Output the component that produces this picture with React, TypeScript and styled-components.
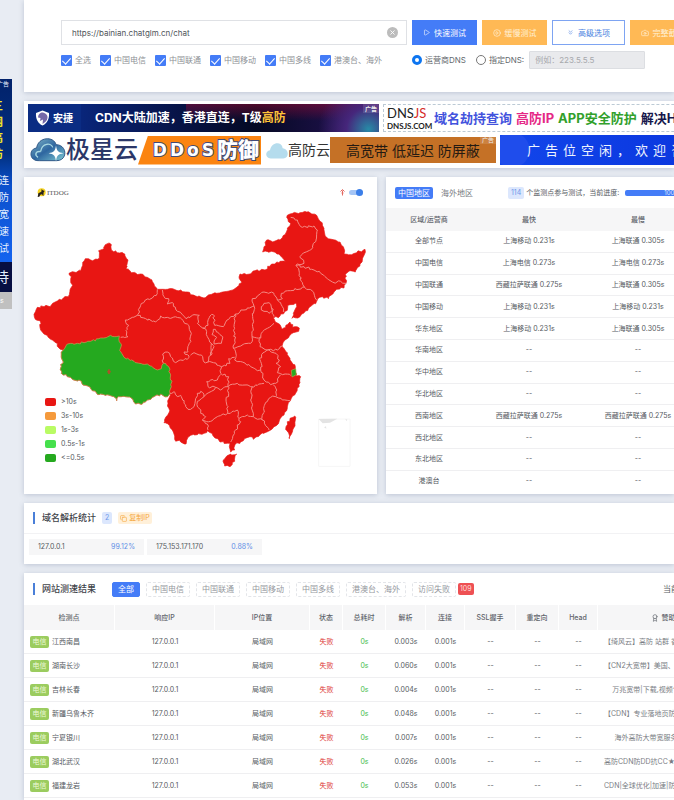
import { FC, useState } from "react";
import styled, { createGlobalStyle, css } from "styled-components";
import { Play, CirclePlay, ChevronsDown, Camera, X, Copy, Award } from "lucide-react";

type Point = [number, number];

const carriers = ["全选", "中国电信", "中国联通", "中国移动", "中国多线", "港澳台、海外"];

const legends = [
    { color: "#e81613", text: ">10s" },
    { color: "#f59a3c", text: "3s-10s" },
    { color: "#b9fb64", text: "1s-3s" },
    { color: "#45e04c", text: "0.5s-1s" },
    { color: "#25a91f", text: "<=0.5s" },
];

const regions = [
    ["全部节点", "上海移动 0.231s", "上海联通 0.305s"],
    ["中国电信", "上海电信 0.273s", "上海电信 0.273s"],
    ["中国联通", "西藏拉萨联通 0.275s", "上海联通 0.305s"],
    ["中国移动", "上海移动 0.231s", "上海移动 0.231s"],
    ["华东地区", "上海移动 0.231s", "上海联通 0.305s"],
    ["华南地区", "--", "--"],
    ["华中地区", "--", "--"],
    ["华北地区", "--", "--"],
    ["西南地区", "西藏拉萨联通 0.275s", "西藏拉萨联通 0.275s"],
    ["西北地区", "--", "--"],
    ["东北地区", "--", "--"],
    ["港澳台", "--", "--"],
];

const filters = ["全部", "中国电信", "中国联通", "中国移动", "中国多线", "港澳台、海外"];

const results = [
    { name: "江西南昌", parse: "0.003s", sponsor: "【绮风云】高防 站群 香港 美国服务器租用" },
    { name: "湖南长沙", parse: "0.060s", sponsor: "【CN2大宽带】美国、香港高防服务器租用" },
    { name: "吉林长春", parse: "0.004s", sponsor: "万兆宽带|下载,视频专用服务器租用" },
    { name: "新疆乌鲁木齐", parse: "0.048s", sponsor: "【CDN】专业落地页防红防封海外加速节点" },
    { name: "宁夏银川", parse: "0.007s", sponsor: "海外高防大带宽服务器租用托管网" },
    { name: "湖北武汉", parse: "0.026s", sponsor: "高防CDN防DD抗CC★免备案加速无视攻击" },
    { name: "福建龙岩", parse: "0.053s", sponsor: "CDN|全球优化|加速|防御|免备案海外节点" },
];

// 地图轮廓
const tibetSouth = "438,580 430,590 410,582 385,592 370,600 355,612 335,612 325,596 305,590 282,590 278,602 270,590 245,586 225,584 205,572 185,556 165,540 150,540 130,530 112,520 110,494 118,486 112,466 118,450";

const mainland = "30,343 36,330 40,322 60,320 66,316 78,320 86,310 100,303 118,294 136,284 138,270 146,256 140,242 142,230 135,220 150,216 170,212 176,196 184,176 200,180 220,178 226,166 224,152 240,146 244,134 258,130 262,150 280,158 298,160 308,176 310,188 306,206 322,218 350,222 370,232 384,240 390,252 400,268 430,268 470,270 490,276 500,284 525,288 540,294 556,284 578,280 618,272 638,262 653,248 646,236 648,222 678,222 693,212 723,210 743,192 768,184 784,184 776,174 764,162 743,154 716,156 720,140 728,120 743,124 768,120 783,104 790,84 800,70 788,52 798,42 828,38 848,36 878,46 888,64 900,85 908,112 923,118 948,126 958,140 960,162 983,164 998,158 1023,148 1018,170 1008,192 994,216 978,212 964,224 966,250 960,264 938,268 928,280 913,296 896,290 878,304 853,326 833,342 828,350 804,355 808,340 818,320 814,310 798,314 783,334 768,348 748,354 754,366 768,374 774,388 784,384 798,366 806,382 826,384 824,394 808,398 796,408 780,424 774,438 790,458 798,480 814,500 816,528 830,530 828,548 820,565 812,585 798,604 790,625 780,645 766,662 750,680 733,694 708,704 688,718 678,710 658,722 633,734 632,750 620,756 616,740 618,730 588,726 573,714 564,700 550,692 540,700 520,704 500,706 492,712 486,732 470,726 452,718 448,696 436,676 420,668 426,650 436,636 432,610 " + tibetSouth + " 105,444 100,430 80,418 60,402 50,390 48,362 34,358 30,343";

const tibet = "118,450 130,432 160,430 200,424 230,414 260,406 286,408 290,430 290,455 300,472 330,484 370,492 395,508 412,506 418,490 434,500 440,525 442,560 " + tibetSouth;

const islands = [
    "598,780 612,766 638,762 632,784 618,800 602,798 598,780",
    "786,680 798,655 812,648 814,660 806,690 796,716 786,680",
];

const borders = [
    "400,268 400,280 385,294 364,300 350,316 340,346 325,352 304,360 314,376 306,392 312,410 290,412",
    "340,346 365,356 395,366 410,348 430,352 470,354 490,372 502,400 496,430 492,455 480,456 495,468 490,478 470,480 455,488 430,456 416,462 418,490",
    "415,270 420,290 434,296 430,312 448,310 456,330 475,344 486,356 510,344 526,346 520,370 536,384 552,376 558,348 568,344 572,376 598,380 620,350 634,342",
    "574,388 588,404 596,410 592,430 570,432 578,412 564,404 568,388 574,388",
    "536,384 548,395 550,410 562,430 560,466 552,486 540,486 536,470 510,458 500,466",
    "562,430 570,440 560,466",
    "634,342 660,330 690,318 685,296 700,288 720,276 750,280 760,300 775,296 772,280 800,272 842,262 832,244 826,220 816,196",
    "816,196 840,200 870,210 890,220 910,236 930,248 950,244 966,250",
    "816,196 840,190 828,170 860,150 876,120 880,90 870,78 835,82 820,60 800,52",
    "842,262 864,272 880,302",
    "634,342 630,380 632,420 628,444 650,438 680,430 684,410",
    "690,318 686,350 686,380 684,410 710,412 712,400 730,385 750,370",
    "712,320 720,310 735,308 742,322 748,330 735,340 720,334 712,330 712,320",
    "742,322 744,340 750,350",
    "760,300 775,320 778,336",
    "712,412 705,424 708,440 730,450 760,450 774,438",
    "628,444 636,470 632,480 655,486 680,500 700,512 710,510 712,490 706,475 722,456 730,450",
    "730,450 756,460 766,480 756,490 770,500 760,518 775,524 800,526",
    "710,510 720,540 740,554 755,550 770,524",
    "552,486 568,488 593,500 618,490 614,476 632,472",
    "593,500 590,520 614,530 612,560 640,550 680,560 720,550",
    "590,524 580,540 560,540 548,545 552,560 575,562 590,570 612,560",
    "438,580 450,575 460,590 470,586 480,610 492,628 505,624 515,596 520,580 530,574 540,590 575,562",
    "540,590 520,604 525,625 530,640 545,650 535,660 550,672 552,690",
    "535,660 560,664 580,650 610,640 640,630 645,655 650,665 635,690 620,726",
    "612,560 614,580 606,600 612,620 610,640",
    "685,560 680,600 688,640 688,650",
    "645,655 670,645 688,650 715,660",
    "798,602 775,600 755,590 740,592 720,620 715,660 735,690",
    "755,590 758,570 748,555",
];

// 折线加一点锯齿，相同的边得到相同的结果
const rough = (source: string) => {
    const points = source.split(" ").map((p) => p.split(",").map(Number) as Point);
    const out: Point[] = [points[0]];
    for (let i = 1; i < points.length; i++) {
        const [ax, ay] = points[i - 1];
        const [bx, by] = points[i];
        const steps = Math.max(1, Math.round(Math.hypot(bx - ax, by - ay) / 7));
        for (let s = 1; s < steps; s++) {
            const x = ax + ((bx - ax) * s) / steps;
            const y = ay + ((by - ay) * s) / steps;
            out.push([x + Math.sin(x * 1.7 + y * 2.3) * 3, y + Math.cos(x * 2.1 - y * 1.3) * 3]);
        }
        out.push([bx, by]);
    }
    return "M" + out.map(([x, y]) => x.toFixed(1) + " " + y.toFixed(1)).join("L");
};

const ChinaMap: FC = () => (
    <SMap viewBox="0 0 1059 870" role="img" aria-label="中国地图">
        <g fill="#e81613" stroke="#e81613" strokeWidth="2">
            <path d={rough(mainland)} />
            {islands.map((d) => <path key={d} d={rough(d)} />)}
        </g>
        <g fill="none" stroke="#f58a84" strokeWidth="3" strokeLinejoin="round">
            {borders.map((d) => <path key={d} d={rough(d)} />)}
        </g>
        <path d={rough(tibet)} fill="#25a91f" stroke="#c9a05a" strokeWidth="2" />
        <path d="M802 511L815 506L817 524L804 531Z" fill="#25a91f" stroke="#b7a34f" strokeWidth="2" />
        <path d="M255 508v14M250 515h10" stroke="#b1502a" strokeWidth="5" />
        <path d="M884 657h94v142h-94z" fill="none" stroke="#f6f6f6" strokeWidth="3" />
        <path d="M884 657L940 656L918 668L896 670ZM900 682l6-3 1 7zM964 656l6 3-3 4z" fill="#e3e3e3" />
    </SMap>
);

const Shield: FC = () => (
    <svg width="15" height="16" viewBox="0 0 30 32">
        <path d="M15 1L28 6C29 18 24 27 15 31C6 27 1 18 2 6Z" fill="#fff" />
        <path d="M13 5c8 0 13 5 12 11c-1 6-5 9-10 12l1-9-6 3 1-6-5-1c0-5 3-9 7-10z" fill="#7568a8" />
    </svg>
);

const CloudLogo: FC = () => (
    <svg width="36" height="24" viewBox="0 0 108 72">
        <defs>
            <linearGradient id="cloud" x1="0" y1="0" x2="1" y2="1">
                <stop offset="0" stopColor="#82b8c8" />
                <stop offset="0.5" stopColor="#2e66a0" />
                <stop offset="1" stopColor="#80cbd4" />
            </linearGradient>
        </defs>
        <path d="M28 68C-4 70-4 32 20 30C24-4 72-6 78 20C112 20 114 68 80 68Z" fill="url(#cloud)" stroke="#315989" strokeWidth="3" />
        <path d="M24 58c-12-8-6-20 8-17M32 40c4-26 32-26 36-12" fill="none" stroke="#a9d9e2" strokeWidth="4" />
        <path d="M78 22c2 17 6 21 22 24c-16 3-20 7-22 24c-2-17-6-21-22-24c16-3 20-7 22-24z" fill="#fff" />
    </svg>
);

const DogLogo: FC = () => (
    <SLogo href="#">
        <svg width="9" height="9" viewBox="0 0 27 27">
            <circle cx="14" cy="13" r="12" fill="#f6d321" />
            <path d="M2 27l2-11 9-5 1-8 3 4 6 2-3 4-1 12-4-6-5 1-3 6z" fill="#29241d" />
        </svg>
        ITDOG
    </SLogo>
);

const App: FC = () => {
    const [url, setUrl] = useState("https://bainian.chatglm.cn/chat");
    const [filter, setFilter] = useState("全部");

    return (
        <>
            <GlobalStyle />
            <SPage>
                <SSide>
                    <SSideAd href="#">
                        <SAdTag>广告</SAdTag>
                        <SSideTitle>{["三", "网", "高", "防"].map((c) => <span key={c}>{c}</span>)}</SSideTitle>
                        <SSideList>{["连", "防", "宽", "速", "试"].map((c) => <span key={c}>{c}</span>)}</SSideList>
                        <SSideFoot>待</SSideFoot>
                    </SSideAd>
                    <SSideClose type="button">s</SSideClose>
                </SSide>
                <SMain>
                    <SFormCard>
                        <SRow>
                            <SUrlBox>
                                <SUrlInput aria-label="网址" value={url} onChange={(e) => setUrl(e.target.value)} />
                                <SClear type="button" aria-label="清空" onClick={() => setUrl("")}><X size={7} strokeWidth={3} /></SClear>
                            </SUrlBox>
                            <SButton type="button" kind="blue"><Play size={7} />快速测试</SButton>
                            <SButton type="button" kind="orange"><CirclePlay size={8} />缓慢测试</SButton>
                            <SButton type="button" kind="line"><ChevronsDown size={7} />高级选项</SButton>
                            <SButton type="button" kind="orange"><Camera size={8} />完整截图</SButton>
                        </SRow>
                        <SOptions>
                            <SChecks>
                                {carriers.map((c) => (
                                    <SCheckLabel key={c}><SCheck type="checkbox" defaultChecked />{c}</SCheckLabel>
                                ))}
                            </SChecks>
                            <SDns>
                                <SRadioLabel><SRadio type="radio" name="dns" defaultChecked />运营商DNS</SRadioLabel>
                                <SRadioLabel><SRadio type="radio" name="dns" />指定DNS:</SRadioLabel>
                                <SDnsInput aria-label="指定DNS" placeholder="例如：223.5.5.5" disabled />
                            </SDns>
                        </SOptions>
                    </SFormCard>

                    <SAdCard>
                        <SAdRow>
                            <SAnjie href="#">
                                <SAnjieBrand><Shield />安捷</SAnjieBrand>
                                <span>CDN大陆加速，香港直连，T级<em>高防</em></span>
                                <SCornerTag>广告</SCornerTag>
                            </SAnjie>
                            <SDnsjs href="#">
                                <SDnsjsLogo><b>DNS<em>JS</em></b><small>DNSJS.COM</small></SDnsjsLogo>
                                <SColored tone="#4353dd">域名劫持查询</SColored>
                                <SColored tone="#e52886">高防IP</SColored>
                                <SColored tone="#31a02b">APP安全防护</SColored>
                                <SColored tone="#17174c">解决HTTP劫持</SColored>
                            </SDnsjs>
                        </SAdRow>
                        <SAdRow>
                            <SJixing href="#">
                                <CloudLogo />
                                <SJixingName>极星云</SJixingName>
                                <SDdos>
                                    {"DDoS".split("").map((c, i) => <span key={i}>{c}</span>)}
                                    <b>防御</b>
                                </SDdos>
                            </SJixing>
                            <SGaofang href="#">
                                <SGaofangName>
                                    <svg width="22" height="17" viewBox="0 0 66 50">
                                        <path d="M14 49C-4 48-3 26 12 24C16-2 48-4 50 18C70 20 70 48 52 49Z" fill="#b5dced" />
                                    </svg>
                                    高防云
                                </SGaofangName>
                                <SGaofangText>高宽带 低延迟 防屏蔽</SGaofangText>
                                <SCornerTag>广告</SCornerTag>
                            </SGaofang>
                            <SVacant href="#">{"广告位空闲，欢迎咨询".split("").map((c) => <span key={c}>{c}</span>)}</SVacant>
                        </SAdRow>
                    </SAdCard>

                    <SColumns>
                        <SMapCard>
                            <SMapHead>
                                <DogLogo />
                                <SSwitchLabel>
                                    <svg width="5" height="7" viewBox="0 0 10 14"><path d="M5 13V3M1 5l4-4 4 4M3 8h4" fill="none" stroke="#e36961" strokeWidth="2" /></svg>
                                    <SSwitch type="checkbox" role="switch" aria-label="标记" defaultChecked />
                                </SSwitchLabel>
                            </SMapHead>
                            <ChinaMap />
                            <SLegend>
                                {legends.map((l) => <SLegendItem key={l.text} tone={l.color}>{l.text}</SLegendItem>)}
                            </SLegend>
                        </SMapCard>
                        <SCard>
                            <SRegionHead>
                                <SAreaTab type="button" active>中国地区</SAreaTab>
                                <SAreaTab type="button">海外地区</SAreaTab>
                                <SProgressInfo>
                                    <SBadge>114</SBadge>
                                    个监测点参与测试，当前进度:
                                    <SProgress>100%</SProgress>
                                </SProgressInfo>
                            </SRegionHead>
                            <SRegionTable>
                                <colgroup><col width="86" /><col width="114" /><col width="104" /></colgroup>
                                <thead><tr><th>区域/运营商</th><th>最快</th><th>最慢</th></tr></thead>
                                <tbody>
                                    {regions.map(([name, fast, slow]) => (
                                        <tr key={name}><td>{name}</td><td>{fast}</td><td>{slow}</td></tr>
                                    ))}
                                </tbody>
                            </SRegionTable>
                        </SCard>
                    </SColumns>

                    <SCard>
                        <SSectionHead>
                            <STitle>域名解析统计</STitle>
                            <SBadge>2</SBadge>
                            <SCopy type="button"><Copy size={7} />复制IP</SCopy>
                        </SSectionHead>
                        <SIpList>
                            <SIpItem>127.0.0.1<span>99.12%</span></SIpItem>
                            <SIpItem>175.153.171.170<span>0.88%</span></SIpItem>
                        </SIpList>
                    </SCard>

                    <SResultCard>
                        <SResultHead>
                            <STitle>网站测速结果</STitle>
                            <SFilters>
                                {filters.map((f) => (
                                    <SFilter key={f} type="button" active={f === filter} onClick={() => setFilter(f)}>{f}</SFilter>
                                ))}
                                <SFilter type="button" active={filter === "访问失败"} onClick={() => setFilter("访问失败")}>访问失败</SFilter>
                            </SFilters>
                            <SCount>109</SCount>
                            <SCurrent>当前</SCurrent>
                        </SResultHead>
                        <SResultTable>
                            <colgroup>
                                <col width="91" /><col width="100" /><col width="95" /><col width="33" /><col width="43" />
                                <col width="40" /><col width="39" /><col width="51" /><col width="43" /><col width="39" /><col width="138" />
                            </colgroup>
                            <thead>
                                <tr>
                                    <th>检测点</th><th>响应IP</th><th>IP位置</th><th>状态</th><th>总耗时</th>
                                    <th>解析</th><th>连接</th><th>SSL握手</th><th>重定向</th><th>Head</th>
                                    <th><SSponsor><Award size={8} />赞助商</SSponsor></th>
                                </tr>
                            </thead>
                            <tbody>
                                {results.map((r) => (
                                    <tr key={r.name}>
                                        <td><SNode><SCarrier>电信</SCarrier>{r.name}</SNode></td>
                                        <td>127.0.0.1</td>
                                        <td>局域网</td>
                                        <SFail>失败</SFail>
                                        <SGood>0s</SGood>
                                        <td>{r.parse}</td>
                                        <td>0.001s</td>
                                        <td>--</td>
                                        <td>--</td>
                                        <td>--</td>
                                        <SSponsorCell>{r.sponsor}</SSponsorCell>
                                    </tr>
                                ))}
                            </tbody>
                        </SResultTable>
                    </SResultCard>
                </SMain>
            </SPage>
        </>
    );
};

export default App;

const GlobalStyle = createGlobalStyle`
    *{
        box-sizing:border-box;
    }
    body{
        margin:0;
        background:#e8ecf3;
        color:#555a61;
        font-family:Inter, "Noto Sans CJK SC", sans-serif;
        font-size:7px;
        line-height:12px;
        white-space:nowrap;
    }
    button, input{
        font:inherit;
        margin:0;
        padding:0;
    }
    a{
        color:inherit;
        text-decoration:none;
    }
    em{
        font-style:normal;
    }
    svg{
        flex:none;
    }
`

const SPage = styled.div`
    display:flex;
    gap:12px;
    min-height:100vh;
    overflow:hidden;
`

const SSide = styled.aside`
    flex:none;
    width:12px;
    padding-top:79px;
`

const SSideAd = styled.a`
    display:flex;
    flex-direction:column;
    height:213px;
    background:linear-gradient(#02226b 0%, #02307f 35%, #0b50cc 50%, #1463ee 85%);
    color:#e4efff;
    overflow:hidden;
`

const SAdTag = styled.span`
    display:flex;
    justify-content:flex-end;
    padding-right:3px;
    font-size:6px;
    line-height:9px;
`

const SSideTitle = styled.strong`
    display:flex;
    flex-direction:column;
    align-items:flex-end;
    height:84px;
    padding:10px 9px 0 0;
    color:#f3ea20;
    font-size:11px;
    line-height:16px;
`

const SSideList = styled.span`
    display:flex;
    flex-direction:column;
    align-items:flex-end;
    height:90px;
    padding-right:3px;
    font-size:10px;
    line-height:17px;
`

const SSideFoot = styled.span`
    display:flex;
    justify-content:flex-end;
    padding-right:3px;
    background:#070f42;
    font-size:14px;
    line-height:30px;
`

const SSideClose = styled.button`
    width:12px;
    height:17px;
    border:none;
    background:#c0c0c0;
    color:#fff;
    text-align:left;
`

const SMain = styled.main`
    display:flex;
    flex:1;
    flex-direction:column;
    gap:9px;
    min-width:0;
`

const SCard = styled.section`
    min-width:0;
    background:#fff;
    box-shadow:0 1px 5px rgba(90,105,140,0.3);
    overflow:hidden;
`

const SFormCard = styled(SCard)`
    height:92px;
    padding:20px 0 0 37px;
`

const SRow = styled.div`
    display:flex;
    gap:5px;
`

const SUrlBox = styled.div`
    display:flex;
    flex:none;
    align-items:center;
    width:346px;
    height:25px;
    padding:0 8px 0 10px;
    border:1px solid #dfe1e5;
`

const SUrlInput = styled.input`
    flex:1;
    border:none;
    outline:none;
    color:#505459;
    font-size:8px;
`

const SClear = styled.button`
    display:flex;
    align-items:center;
    justify-content:center;
    width:11px;
    height:11px;
    border:none;
    border-radius:50%;
    background:#bcbcbc;
    color:#fff;
`

const SButton = styled.button<{kind:"blue"|"orange"|"line"}>`
    display:flex;
    flex:none;
    align-items:center;
    justify-content:center;
    gap:4px;
    width:${({kind}) => (kind === "line" ? "73px" : "65px")};
    height:25px;
    border:1px solid ${({kind}) => ({blue:"#447cf7", orange:"#ffb955", line:"#7ea4f2"})[kind]};
    background:${({kind}) => ({blue:"#447cf7", orange:"#ffb955", line:"#fff"})[kind]};
    color:${({kind}) => ({blue:"#fff", orange:"#fff0d6", line:"#4a7fe0"})[kind]};
    font-size:8px;
`

const SOptions = styled.div`
    display:flex;
    align-items:center;
    gap:30px;
    padding-top:6px;
    font-size:8px;
`

const SChecks = styled.div`
    display:flex;
    gap:9px;
    color:#8e9196;
`

const SCheckLabel = styled.label`
    display:flex;
    align-items:center;
    gap:3px;
`

const SCheck = styled.input`
    appearance:none;
    display:flex;
    align-items:flex-start;
    justify-content:center;
    width:11px;
    height:11px;
    border-radius:1px;
    background:#447cf7;

    &:checked::after{
        content:"";
        width:4px;
        height:7px;
        margin-top:1px;
        border:solid #fff;
        border-width:0 1px 1px 0;
        transform:rotate(42deg);
    }
`

const SDns = styled.div`
    display:flex;
    align-items:center;
    gap:10px;
`

const SRadioLabel = styled(SCheckLabel)`
    color:#63676d;

    & + &{
        margin-right:-5px;
    }
`

const SRadio = styled.input`
    appearance:none;
    width:10px;
    height:10px;
    border:1px solid #777;
    border-radius:50%;

    &:checked{
        border:3px solid #0d75f0;
    }
`

const SDnsInput = styled.input`
    width:116px;
    height:18px;
    padding:0 5px;
    border:1px solid #dcdee2;
    border-radius:1px;
    background:#e9eaed;

    &::placeholder{
        color:#a6a8ac;
    }
`

const SAdCard = styled(SCard)`
    display:flex;
    flex-direction:column;
    gap:3px;
    padding:3px 0 3px 4px;
`

const SAdRow = styled.div`
    display:flex;
    gap:4px;
`

const SBanner = styled.a`
    position:relative;
    display:flex;
    flex:none;
    align-items:center;
    overflow:hidden;
`

const SCornerTag = styled.small`
    position:absolute;
    top:0;
    right:0;
    padding:0 2px;
    background:rgba(255,255,255,0.12);
    color:#eee;
    font-size:6px;
    line-height:9px;
`

const SAnjie = styled(SBanner)`
    gap:14px;
    width:351px;
    height:28px;
    background:radial-gradient(circle at 97% 90%, #278ba7 0, #46267b 22px, transparent 50px), linear-gradient(180deg, rgba(170,10,50,0.45), transparent 60%) right / 55% 100% no-repeat, linear-gradient(90deg, #0a2f96 0%, #071243 45%, #040923 65%, #2a145b 100%);
    color:#fff;
    font-size:12px;
    font-weight:700;

    em{
        color:#ffc338;
    }
`

const SAnjieBrand = styled.span`
    display:flex;
    align-items:center;
    gap:3px;
    width:53px;
    height:28px;
    padding-left:7px;
    background:#0b2c83;
    font-size:10px;
`

const SDnsjs = styled(SBanner)`
    flex:1 0 auto;
    gap:4px;
    height:28px;
    padding-left:3px;
    border:1px dashed #bccad5;
`

const SDnsjsLogo = styled.span`
    display:flex;
    flex-direction:column;
    width:43px;
    color:#222;
    font-family:Lato, sans-serif;

    b{
        font-size:13px;
        font-weight:400;
        line-height:16px;
    }
    em{
        color:#d52b28;
    }
    small{
        font-size:8px;
        font-weight:700;
        line-height:10px;
    }
`

const SColored = styled.span<{tone:string}>`
    color:${({tone}) => tone};
    font-size:13px;
    font-weight:700;
`

const SJixing = styled(SBanner)`
    width:233px;
    height:30px;
    padding-left:2px;
`

const SJixingName = styled.strong`
    color:#2b3768;
    font-size:24px;
    font-weight:500;
    line-height:28px;
`

const SDdos = styled.span`
    display:flex;
    flex:1;
    align-items:center;
    justify-content:flex-end;
    gap:3px;
    height:29px;
    padding-right:2px;
    background:#fb8411;
    clip-path:polygon(10px 0, 100% 0, 100% 100%, 0 100%);
    color:#fff;
    font-family:"DejaVu Sans", "Noto Sans CJK SC", sans-serif;
    font-size:17px;
    font-weight:700;
    line-height:29px;
    paint-order:stroke fill;
    -webkit-text-stroke:2px #404b7a;

    b{
        font-size:21px;
    }
`

const SGaofang = styled(SBanner)`
    width:231px;
    height:30px;
`

const SGaofangName = styled.span`
    display:flex;
    align-items:center;
    width:65px;
    padding-left:1px;
    color:#333;
    font-size:14px;
`

const SGaofangText = styled.span`
    flex:1;
    height:26px;
    padding-left:16px;
    background:#c57126;
    color:#251a12;
    font-size:14px;
    line-height:28px;
`

const SVacant = styled(SBanner)`
    flex:1 0 auto;
    gap:5px;
    height:30px;
    padding-left:27px;
    background:radial-gradient(circle at 12px 15px, #1f4dec 17px, transparent 18px), linear-gradient(90deg, #1246eb, #0a36de);
    color:#eef4ff;
    font-size:13px;
`

const SColumns = styled.div`
    display:grid;
    grid-template-columns:353px minmax(0, 1fr);
    gap:9px;
`

const SMapCard = styled(SCard)`
    position:relative;
    padding-bottom:4px;
`

const SMapHead = styled.div`
    display:flex;
    align-items:center;
    justify-content:space-between;
    height:23px;
    padding:8px 14px 0 13px;
`

const SLogo = styled.a`
    display:flex;
    align-items:center;
    gap:1px;
    color:#565656;
    font-family:"Liberation Serif", serif;
    font-size:7px;
`

const SSwitchLabel = styled.label`
    display:flex;
    align-items:center;
    gap:4px;
`

const SSwitch = styled.input`
    appearance:none;
    display:flex;
    align-items:center;
    justify-content:flex-end;
    width:14px;
    height:5px;
    border-radius:3px;
    background:#a5c5f5;

    &::after{
        content:"";
        width:7px;
        height:7px;
        border-radius:50%;
        background:#3c7fe9;
    }
`

const SMap = styled.svg`
    display:block;
    width:100%;
`

const SLegend = styled.ul`
    position:absolute;
    bottom:29px;
    left:21px;
    margin:0;
    padding:0;
    list-style:none;
`

const SLegendItem = styled.li<{tone:string}>`
    display:flex;
    align-items:center;
    gap:5px;
    height:14px;

    &::before{
        content:"";
        width:11px;
        height:8px;
        border-radius:2px;
        background:${({tone}) => tone};
    }
`

const SRegionHead = styled.div`
    display:flex;
    align-items:center;
    height:31px;
    padding-left:9px;
`

const SAreaTab = styled.button<{active?:boolean}>`
    height:12px;
    padding:0 3px;
    margin-right:5px;
    border:none;
    border-radius:2px;
    background:${({active}) => (active ? "#447cf7" : "none")};
    color:${({active}) => (active ? "#fff" : "#777b81")};
    font-size:8px;
    line-height:12px;
`

const SProgressInfo = styled.div`
    display:flex;
    align-items:center;
    gap:2px;
    margin-left:27px;
`

const SBadge = styled.span`
    padding:0 3px;
    border-radius:2px;
    background:#dce7fd;
    color:#6f97ea;
`

const SProgress = styled.span`
    width:94px;
    height:6px;
    margin-left:4px;
    border-radius:2px;
    background:#447cf7;
    color:#dfe9ff;
    font-size:6px;
    line-height:6px;
    text-align:center;
`

const tableBase = css`
    border-collapse:separate;
    border-spacing:0;
    table-layout:fixed;
    text-align:center;

    th, td{
        padding:0;
        overflow:hidden;
    }
    th{
        background:#f6f6f7;
        color:#5f646b;
        font-weight:500;
    }
    td{
        border-bottom:1px solid #efeff1;
    }
`

const SRegionTable = styled.table`
    ${tableBase}
    width:100%;
    min-width:304px;
    height:283px;

    th{
        height:23px;
    }
    tr:last-child td{
        border-bottom:none;
    }
`

const SSectionHead = styled.div`
    display:flex;
    align-items:center;
    gap:6px;
    height:31px;
    padding-left:9px;
    border-bottom:1px solid #f2f2f4;
`

const STitle = styled.h2`
    margin:0;
    padding-left:7px;
    border-left:2px solid #4a7fd8;
    color:#3f444b;
    font-size:9px;
    font-weight:500;
`

const SCopy = styled.button`
    display:flex;
    align-items:center;
    gap:2px;
    height:12px;
    padding:0 2px;
    border:none;
    border-radius:2px;
    background:#fff0d9;
    color:#f5a63a;
`

const SIpList = styled.div`
    display:flex;
    gap:3px;
    padding:5px 5px 9px;
`

const SIpItem = styled.div`
    display:flex;
    justify-content:space-between;
    width:115px;
    padding:2px 9px;
    background:#f6f6f7;

    span{
        color:#5f8fe6;
    }
`

const SResultCard = styled(SCard)`
    flex:1;
`

const SResultHead = styled.div`
    display:flex;
    align-items:center;
    height:32px;
    padding-left:9px;
`

const SFilters = styled.div`
    display:flex;
    gap:6px;
    margin-left:16px;
`

const SFilter = styled.button<{active:boolean}>`
    height:15px;
    padding:0 5px;
    border:1px ${({active}) => (active ? "solid #447cf7" : "dashed #e3e5e9")};
    border-radius:2px;
    background:${({active}) => (active ? "#447cf7" : "#fff")};
    color:${({active}) => (active ? "#fff" : "#95989e")};
    font-size:8px;
    line-height:12px;
`

const SCount = styled.span`
    margin-left:2px;
    padding:0 2px;
    border-radius:2px;
    background:#ee5053;
    color:#ffdede;
`

const SCurrent = styled.span`
    margin-left:auto;
    margin-right:-5px;
    font-size:8px;
`

const SResultTable = styled.table`
    ${tableBase}
    width:100%;
    min-width:712px;

    th{
        height:25px;
        border-right:1px solid #fff;
    }
    td{
        height:24px;
    }
`

const SNode = styled.span`
    display:flex;
    align-items:center;
    gap:3px;
    padding-left:6px;
`

const SCarrier = styled.span`
    width:19px;
    border-radius:2px;
    background:#9bcc5f;
    color:#edf9d9;
`

const SFail = styled.td`
    color:#dd3834;
`

const SGood = styled.td`
    color:#46bd4a;
`

const SSponsor = styled.span`
    display:flex;
    align-items:center;
    justify-content:center;
    gap:3px;
`

const SSponsorCell = styled.td`
    && {
        padding:0 6px;
        text-overflow:ellipsis;
    }
    color:#797d83;
`
